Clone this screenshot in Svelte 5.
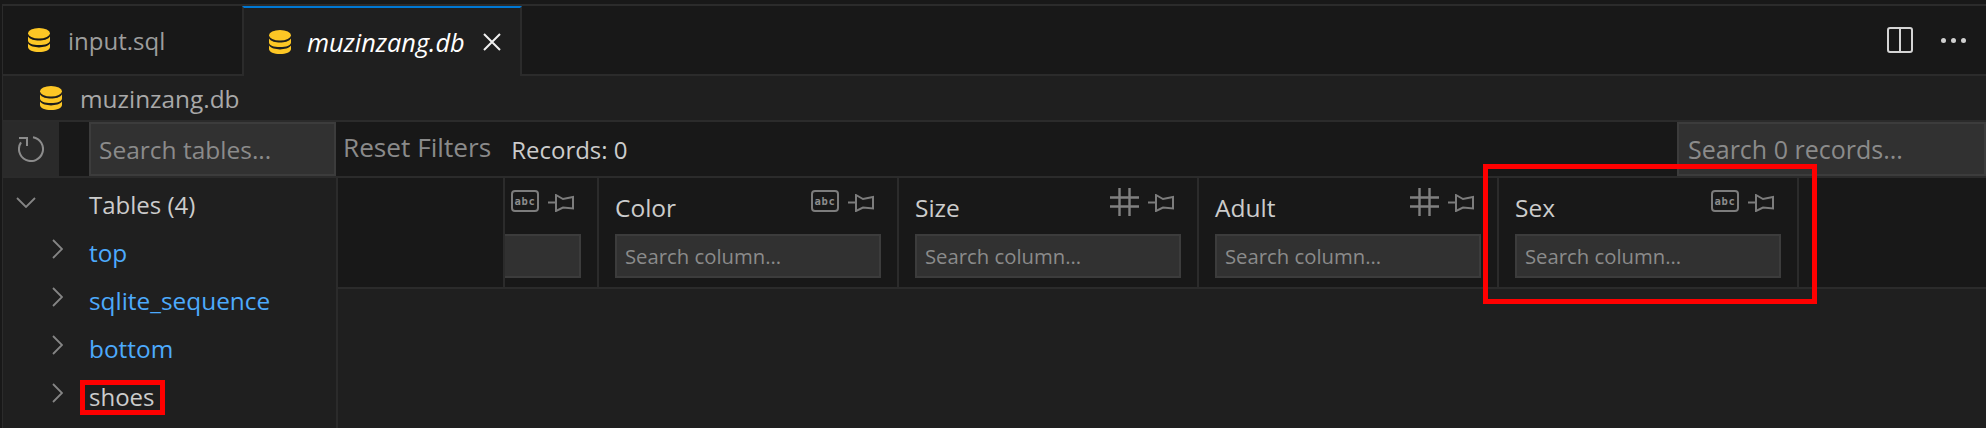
<script>
  const tables = [
    { name: 'top', link: true },
    { name: 'sqlite_sequence', link: true },
    { name: 'bottom', link: true },
    { name: 'shoes', link: false }
  ];
  const columns = [
    { name: 'Color', type: 'abc' },
    { name: 'Size', type: 'num' },
    { name: 'Adult', type: 'num' },
    { name: 'Sex', type: 'abc' }
  ];
</script>

{#snippet db()}
  <svg class="db" viewBox="0 0 22 24" aria-hidden="true">
    <ellipse cx="11" cy="5.2" rx="11" ry="5.2" fill="#fdc725" />
    <path d="M0 8.6C2 11.6 6.5 12.6 11 12.6S20 11.6 22 8.6V12.4C22 15.2 17 17.1 11 17.1S0 15.2 0 12.4Z" fill="#fdc725" />
    <path d="M0 15.6C2 18.4 6.5 19.4 11 19.4S20 18.4 22 15.6V19C22 22 17 24 11 24S0 22 0 19Z" fill="#fdc725" />
  </svg>
{/snippet}

{#snippet pin()}
  <svg class="pin" viewBox="0 0 26 18" aria-hidden="true">
    <path d="M0 8.5H8M8 1L15 5 25 3V14.5L15 13.5 8 17Z" fill="none" stroke="#7c7c7c" stroke-width="2" />
  </svg>
{/snippet}

{#snippet typeIcon(type)}
  {#if type === 'abc'}
    <svg class="abc" viewBox="0 0 28 22" aria-hidden="true">
      <rect x="1" y="1" width="26" height="20" rx="3" fill="none" stroke="#7c7c7c" stroke-width="2" />
      <text x="14" y="15" text-anchor="middle">abc</text>
    </svg>
  {:else}
    <svg class="hash" viewBox="0 0 29 28" aria-hidden="true">
      <path d="M9.5 0V28M19.5 0V28M0 9.5H29M0 18.5H29" stroke="#808080" stroke-width="2.4" fill="none" />
    </svg>
  {/if}
{/snippet}

<div class="app">
  <div class="frame">
    <header class="tabs">
      <div class="tab">
        {@render db()}
        <span>input.sql</span>
      </div>
      <div class="tab active">
        {@render db()}
        <span>muzinzang.db</span>
        <svg class="close" viewBox="0 0 18 18" aria-hidden="true">
          <path d="M1 1L17 17M17 1L1 17" stroke="#f0f0f0" stroke-width="2" fill="none" />
        </svg>
      </div>
      <div class="actions">
        <svg class="split" viewBox="0 0 26 26" aria-hidden="true">
          <rect x="1" y="1" width="24" height="24" rx="2" fill="none" stroke="#d4d4d4" stroke-width="2" />
          <path d="M13 1V25" stroke="#d4d4d4" stroke-width="2" />
        </svg>
        <div class="dots"><i></i><i></i><i></i></div>
      </div>
    </header>

    <nav class="crumb">
      {@render db()}
      <span>muzinzang.db</span>
    </nav>

    <section class="toolbar">
      <button class="refresh" aria-label="Refresh">
        <svg viewBox="0 0 26 26" aria-hidden="true">
          <path d="M15 1.2A12 12 0 1 1 3 6.4M1 2H9V10" fill="none" stroke="#8c8c8c" stroke-width="2" />
        </svg>
      </button>
      <input class="search tables-search" placeholder="Search tables..." />
      <span class="reset">Reset Filters</span>
      <span class="records">Records: 0</span>
      <input class="search records-search" placeholder="Search 0 records..." />
    </section>

    <div class="body">
      <aside class="sidebar">
        <div class="row root">
          <svg class="chev down" viewBox="0 0 20 11" aria-hidden="true">
            <path d="M1 1L10 10 19 1" fill="none" stroke="#858585" stroke-width="1.8" />
          </svg>
          <span>Tables (4)</span>
        </div>
        {#each tables as t}
          <div class="row">
            <svg class="chev right" viewBox="0 0 11 20" aria-hidden="true">
              <path d="M1 1L10 10 1 19" fill="none" stroke="#858585" stroke-width="1.8" />
            </svg>
            <span class:link={t.link}>{t.name}</span>
          </div>
        {/each}
      </aside>

      <main class="grid">
        <div class="headers">
          <div class="cell spacer"></div>
          <div class="cell clipped">
            <div class="head">
              {@render typeIcon('abc')}
              {@render pin()}
            </div>
            <div class="clip-input"></div>
          </div>
          {#each columns as c}
            <div class="cell">
              <div class="head">
                <span class="label">{c.name}</span>
                {@render typeIcon(c.type)}
                {@render pin()}
              </div>
              <input class="search col-search" placeholder="Search column..." />
            </div>
          {/each}
        </div>
      </main>
    </div>
  </div>

  <div class="mark mark-shoes"></div>
  <div class="mark mark-sex"></div>
</div>

<style>
  :global(body) {
    margin: 0;
    background: #181818;
  }
  .app {
    position: relative;
    width: 1986px;
    height: 428px;
    padding: 4px 0 0 2px;
    box-sizing: border-box;
    overflow: hidden;
    background: #181818;
    font-family: "Open Sans", "Noto Sans", sans-serif;
    font-size: 24px;
    color: #cccccc;
  }
  .frame {
    height: 424px;
    display: flex;
    flex-direction: column;
    border-top: 2px solid #2b2b2b;
    border-left: 1px solid #2b2b2b;
  }
  .tabs {
    height: 70px;
    flex: none;
    display: flex;
    border-bottom: 2px solid #2b2b2b;
    background: #181818;
    box-sizing: border-box;
  }
  .tab {
    width: 239px;
    flex: none;
    display: flex;
    align-items: center;
    gap: 18px;
    padding-left: 25px;
    box-sizing: border-box;
    color: #9d9d9d;
  }
  .tab.active {
    position: relative;
    width: 280px;
    margin-bottom: -2px;
    gap: 16px;
    border-top: 2px solid #0078d4;
    border-right: 2px solid #2b2b2b;
    border-left: 2px solid #2b2b2b;
    background: #1f1f1f;
    color: #ffffff;
    font-style: italic;
    font-size: 25.3px;
  }
  .db {
    width: 22px;
    height: 24px;
    flex: none;
  }
  .close {
    width: 18px;
    height: 18px;
    margin-left: 2px;
  }
  .actions {
    margin-left: auto;
    padding-right: 20px;
    display: flex;
    align-items: center;
    gap: 28px;
  }
  .split {
    width: 26px;
    height: 26px;
  }
  .dots {
    display: flex;
    gap: 5px;
  }
  .dots i {
    width: 5px;
    height: 5px;
    border-radius: 50%;
    background: #d0d0d0;
  }
  .crumb {
    height: 44px;
    flex: none;
    display: flex;
    align-items: center;
    gap: 18px;
    padding-left: 37px;
    background: #1f1f1f;
    color: #a9a9a9;
    font-size: 24.4px;
    border-bottom: 2px solid #2b2b2b;
  }
  .toolbar {
    height: 54px;
    flex: none;
    display: flex;
    align-items: stretch;
    background: #181818;
    border-bottom: 2px solid #2b2b2b;
  }
  .refresh {
    width: 56px;
    flex: none;
    padding: 0;
    border: none;
    background: #2a2a2a;
    display: flex;
    align-items: center;
    justify-content: center;
  }
  .refresh svg {
    width: 26px;
    height: 26px;
  }
  .search {
    box-sizing: border-box;
    margin: 0;
    padding: 0 9px;
    background: #313131;
    border: 2px solid #3c3c3c;
    border-radius: 0;
    color: #cccccc;
    font: inherit;
    outline: none;
  }
  .search::placeholder {
    color: #8b8b8b;
    opacity: 1;
  }
  .tables-search {
    width: 247px;
    flex: none;
    margin-left: 30px;
    padding-left: 8px;
    font-size: 24.5px;
  }
  .reset {
    margin-left: 7px;
    align-self: center;
    font-size: 26.2px;
    color: #8a8a8a;
    margin-top: -4px;
  }
  .records {
    margin-left: 20px;
    align-self: center;
    color: #cccccc;
  }
  .records-search {
    margin-left: auto;
    width: 309px;
    flex: none;
    font-size: 25px;
  }
  .body {
    flex: 1;
    min-height: 0;
    display: flex;
    background: #1f1f1f;
  }
  .sidebar {
    width: 333px;
    flex: none;
    border-right: 2px solid #2b2b2b;
  }
  .row {
    height: 48px;
    display: flex;
    align-items: center;
    position: relative;
    padding-left: 86px;
    color: #cccccc;
  }
  .row.root {
    height: 50px;
    padding-top: 2px;
    box-sizing: border-box;
  }
  .chev {
    position: absolute;
  }
  .chev.down {
    left: 13px;
    top: 19px;
    width: 20px;
    height: 11px;
  }
  .chev.right {
    left: 49px;
    top: 11px;
    width: 11px;
    height: 20px;
  }
  .link {
    color: #4daafc;
    font-size: 24.4px;
  }
  .grid {
    flex: 1;
    min-width: 0;
  }
  .headers {
    height: 111px;
    display: flex;
    background: #181818;
    border-bottom: 2px solid #2b2b2b;
    box-sizing: border-box;
  }
  .cell {
    width: 300px;
    flex: none;
    box-sizing: border-box;
    padding: 12px 16px 0;
    border-right: 2px solid #2b2b2b;
  }
  .spacer {
    width: 167px;
  }
  .clipped {
    width: 94px;
    padding: 12px 16px 0 0;
  }
  .head {
    height: 44px;
    display: flex;
    align-items: flex-start;
    justify-content: flex-end;
    gap: 9px;
    padding-right: 7px;
  }
  .clipped .head {
    padding: 0 7px 0 6px;
    justify-content: flex-start;
  }
  .label {
    margin-right: auto;
    margin-top: 1px;
    font-size: 24.5px;
    line-height: 34px;
  }
  .abc {
    width: 28px;
    height: 22px;
  }
  .abc text {
    font-family: "DejaVu Sans Mono", monospace;
    font-size: 10.5px;
    font-weight: 700;
    letter-spacing: 0.6px;
    fill: #8c8c8c;
  }
  .hash {
    width: 29px;
    height: 28px;
    margin-top: -2px;
  }
  .pin {
    width: 26px;
    height: 18px;
    margin-top: 4px;
  }
  .col-search {
    width: 100%;
    height: 44px;
    padding-left: 8px;
    font-size: 20.3px;
  }
  .clip-input {
    height: 44px;
    background: #313131;
    border: 2px solid #3c3c3c;
    border-left: none;
    box-sizing: border-box;
  }
  .mark {
    position: absolute;
    box-sizing: border-box;
    border: 5px solid #ff0000;
  }
  .mark-shoes {
    left: 80px;
    top: 380px;
    width: 85px;
    height: 35px;
  }
  .mark-sex {
    left: 1483px;
    top: 164px;
    width: 334px;
    height: 140px;
  }
</style>
